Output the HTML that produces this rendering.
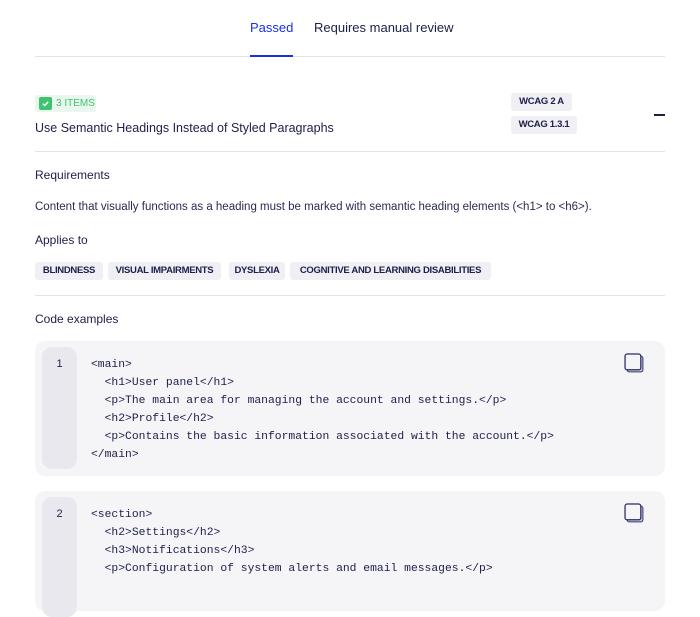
<!DOCTYPE html>
<html><head><meta charset="utf-8"><style>
*{margin:0;padding:0;box-sizing:border-box}
body{width:700px;height:580px;overflow:hidden;background:#fff;font-family:"Liberation Sans",sans-serif;color:#1d1e4a;position:relative}
.a{position:absolute;white-space:nowrap}
.line{position:absolute;left:35px;width:630px;height:1px;background:#e2e2e8}
.tag{position:absolute;height:18px;background:#efeff4;border-radius:3px;font-size:9.5px;line-height:18px;text-align:center;color:#1d1e4a;letter-spacing:-0.3px;font-weight:bold;-webkit-text-stroke:0}
.code{position:absolute;left:35px;width:630px;background:#f5f5f8;border-radius:10px}
.num{position:absolute;left:7px;top:6px;width:35px;background:#e8e8ee;border-radius:10px;font-size:11px;text-align:center;padding-top:11px;color:#1d1e4a}
pre{position:absolute;left:56px;top:15px;font-family:"Liberation Mono",monospace;font-size:11.35px;line-height:18px;color:#1d1e4a}
.copy{position:absolute;right:20px;top:12px;width:21px;height:21px}
</style></head><body>
<div class="a" style="left:250px;top:20px;font-size:13px;color:#1a2ee6">Passed</div>
<div class="a" style="left:314px;top:20px;font-size:13px">Requires manual review</div>
<div class="line" style="top:56px"></div>
<div class="a" style="left:250px;top:55px;width:43px;height:2px;background:#1a2ee6"></div>

<div class="a" style="left:35px;top:95px;width:61px;height:17px;background:#e9f7ee;border-radius:3px"></div>
<div class="a" style="left:39px;top:97px;width:13px;height:13px;background:#3cc46e;border-radius:2px"></div>
<svg class="a" style="left:39px;top:97px" width="13" height="13"><path d="M3.8 6.7 L5.7 8.5 L9.2 4.8" stroke="#fff" stroke-width="1.5" fill="none"/></svg>
<div class="a" style="left:56px;top:98px;font-size:10px;color:#3cc46e;line-height:12px">3 ITEMS</div>
<div class="a" style="left:35px;top:121px;font-size:12.5px">Use Semantic Headings Instead of Styled Paragraphs</div>
<div class="tag" style="left:511px;top:93px;width:61px">WCAG 2 A</div>
<div class="tag" style="left:511px;top:116px;width:66px">WCAG 1.3.1</div>
<div class="a" style="left:654px;top:114px;width:11px;height:2px;background:#1d1e4a"></div>
<div class="line" style="top:151px"></div>

<div class="a" style="left:35px;top:168px;font-size:12px">Requirements</div>
<div class="a" style="left:35px;top:201px;font-size:11.5px;color:#2a2b50">Content that visually functions as a heading must be marked with semantic heading elements (&lt;h1&gt; to &lt;h6&gt;).</div>
<div class="a" style="left:35px;top:233px;font-size:12px">Applies to</div>
<div class="tag" style="left:35px;top:262px;width:68px">BLINDNESS</div>
<div class="tag" style="left:108px;top:262px;width:113px">VISUAL IMPAIRMENTS</div>
<div class="tag" style="left:229px;top:262px;width:56px">DYSLEXIA</div>
<div class="tag" style="left:290px;top:262px;width:201px">COGNITIVE AND LEARNING DISABILITIES</div>
<div class="line" style="top:295px"></div>
<div class="a" style="left:35px;top:312px;font-size:12px">Code examples</div>

<div class="code" style="top:341px;height:135px">
<div class="num" style="height:122px">1</div>
<pre>&lt;main&gt;
  &lt;h1&gt;User panel&lt;/h1&gt;
  &lt;p&gt;The main area for managing the account and settings.&lt;/p&gt;
  &lt;h2&gt;Profile&lt;/h2&gt;
  &lt;p&gt;Contains the basic information associated with the account.&lt;/p&gt;
&lt;/main&gt;</pre>
<svg class="copy" viewBox="0 0 20 20"><rect x="3" y="3" width="15" height="15" rx="2" fill="#c8c9dc" stroke="#3a3b6a" stroke-width="1"/><rect x="1" y="1" width="15" height="15" rx="2" fill="#f5f5f8" stroke="#2a2b5e" stroke-width="1.2"/></svg>
</div>

<div class="code" style="top:491px;height:120px">
<div class="num" style="height:120px">2</div>
<pre>&lt;section&gt;
  &lt;h2&gt;Settings&lt;/h2&gt;
  &lt;h3&gt;Notifications&lt;/h3&gt;
  &lt;p&gt;Configuration of system alerts and email messages.&lt;/p&gt;</pre>
<svg class="copy" viewBox="0 0 20 20"><rect x="3" y="3" width="15" height="15" rx="2" fill="#c8c9dc" stroke="#3a3b6a" stroke-width="1"/><rect x="1" y="1" width="15" height="15" rx="2" fill="#f5f5f8" stroke="#2a2b5e" stroke-width="1.2"/></svg>
</div>
</body></html>
